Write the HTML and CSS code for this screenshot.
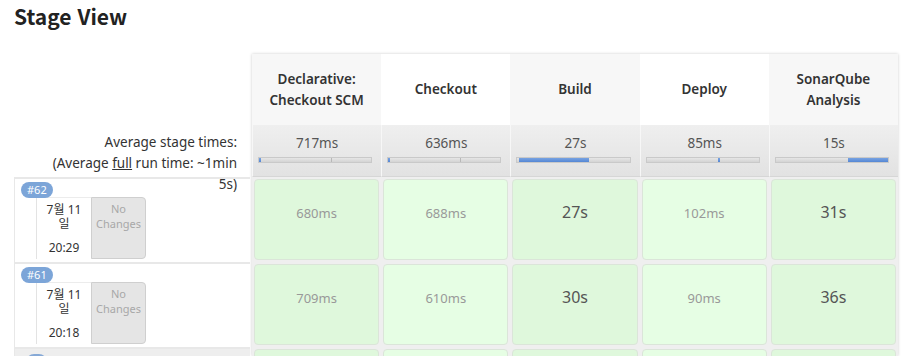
FILE: index.html
```html
<!DOCTYPE html>
<html lang="ko">
<head>
<meta charset="utf-8">
<title>Stage View</title>
<link rel="stylesheet" href="styles.css">
</head>
<body>
<h2 class="title">Stage View</h2>
<div class="sv">
  <div class="left">
    <div class="corner"></div>
    <div class="avg-label">Average stage times:<br>(Average <u>full</u> run time: ~1min 5s)</div>
    <div class="run">
      <span class="badge">#62</span>
      <div class="info">
        <div class="date"><div class="d">7월 11일</div><div class="t">20:29</div></div>
        <div class="nochg">No<br>Changes</div>
      </div>
    </div>
    <div class="run">
      <span class="badge">#61</span>
      <div class="info">
        <div class="date"><div class="d">7월 11일</div><div class="t">20:18</div></div>
        <div class="nochg">No<br>Changes</div>
      </div>
    </div>
    <div class="run dim"><span class="badge b3"></span></div>
  </div>

  <div class="stages">
    <div class="sh">Declarative:<br>Checkout SCM</div>
    <div class="sh alt">Checkout</div>
    <div class="sh">Build</div>
    <div class="sh alt">Deploy</div>
    <div class="sh">SonarQube<br>Analysis</div>

    <div class="sa">717ms<div class="bar"><i class="fill" style="left:0;width:1.5%"></i><i class="tick"></i></div></div>
    <div class="sa">636ms<div class="bar"><i class="fill" style="left:0;width:1.5%"></i><i class="tick"></i></div></div>
    <div class="sa">27s<div class="bar"><i class="fill" style="left:1%;width:63%"></i></div></div>
    <div class="sa">85ms<div class="bar"><i class="fill" style="left:63.5%;width:1%"></i></div></div>
    <div class="sa">15s<div class="bar"><i class="fill" style="left:64.5%;width:35.5%"></i></div></div>

    <div class="sc"><span class="ms">680ms</span></div>
    <div class="sc alt"><span class="ms">688ms</span></div>
    <div class="sc"><span class="s">27s</span></div>
    <div class="sc alt"><span class="ms">102ms</span></div>
    <div class="sc"><span class="s">31s</span></div>

    <div class="sc"><span class="ms">709ms</span></div>
    <div class="sc alt"><span class="ms">610ms</span></div>
    <div class="sc"><span class="s">30s</span></div>
    <div class="sc alt"><span class="ms">90ms</span></div>
    <div class="sc"><span class="s">36s</span></div>

    <div class="sc"></div>
    <div class="sc alt"></div>
    <div class="sc"></div>
    <div class="sc alt"></div>
    <div class="sc"></div>
  </div>
</div>
</body>
</html>
```

FILE: styles.css
```css
* { box-sizing: border-box; }
html, body { overflow: hidden; }
body {
  margin: 0;
  padding: 0 14px;
  background: #fff;
  color: #333;
  font-family: "Noto Sans", "Noto Sans CJK KR", sans-serif;
}
.title {
  margin: 0;
  height: 54px;
  padding-top: 2px;
  font-family: "Noto Sans CJK KR", sans-serif;
  font-size: 21px;
  line-height: 28px;
  font-weight: 700;
  color: #222;
}
.sv {
  display: flex;
  align-items: flex-start;
}
.left {
  width: 238px;
  display: grid;
  grid-template-rows: 71px 52px 85px 85px 9px;
}
.stages {
  width: 646px;
  display: grid;
  grid-template-columns: repeat(5, 1fr);
  grid-template-rows: 71px 52px 85px 85px 9px;
  background: #efefef;
  box-shadow: 0 0 3px rgba(0, 0, 0, 0.2);
}
.sh {
  display: flex;
  align-items: center;
  justify-content: center;
  text-align: center;
  background: #f7f7f7;
  font-size: 13.5px;
  line-height: 21px;
  font-weight: 600;
  color: #333;
}
.sh.alt { background: #fff; }
.avg-label {
  position: relative;
  z-index: 2;
  text-align: right;
  padding: 7px 15px 0 30px;
  font-size: 13.5px;
  line-height: 21px;
  color: #333;
}
.sa {
  text-align: center;
  padding-top: 8px;
  font-size: 13.5px;
  line-height: 20px;
  color: #555;
  background: linear-gradient(#efefef, #e2e2e2);
  border-left: 1px solid #f7f7f7;
  border-bottom: 1px solid #d6d6d6;
}
.bar {
  position: relative;
  height: 6px;
  margin: 4px 9px 0 5px;
  background: linear-gradient(#e6e6e6, #d4d4d4);
  border: 1px solid #c9c9c9;
}
.fill {
  position: absolute;
  top: 0;
  bottom: 0;
  min-width: 2px;
  background: linear-gradient(#78a3e2, #5587d4);
}
.tick {
  position: absolute;
  top: 0;
  bottom: 0;
  left: 64%;
  width: 1px;
  background: #b8b8b8;
}
.run {
  position: relative;
  margin-right: 2px;
  background: #fff;
  border-top: 2px solid #e8e8e8;
  border-left: 1px solid #e8e8e8;
}
.run.dim { background: #eeeeee; }
.badge {
  position: absolute;
  top: 3px;
  left: 6px;
  z-index: 1;
  height: 16px;
  padding: 0 6px;
  border-radius: 8px;
  background: #7ca5d8;
  color: #fff;
  font-size: 11px;
  line-height: 16px;
}
.badge.b3 { left: 11px; top: 5px; width: 21px; background: #86a9d6; }
.info {
  display: flex;
  margin: 18px 0 0 21px;
  height: 62px;
}
.date {
  width: 55px;
  border-left: 1px solid #e3e3e3;
  border-top: 1px solid #ececec;
  text-align: center;
  font-size: 12px;
  line-height: 14px;
  color: #333;
  padding: 5px 6px 0;
}
.t { margin-top: 10px; }
.nochg {
  width: 55px;
  background: #e5e5e5;
  border: 1px solid #cfcfcf;
  border-radius: 0 4px 4px 0;
  text-align: center;
  font-size: 11px;
  line-height: 15px;
  color: #a8a8a8;
  padding-top: 3px;
}
.sc {
  margin: 2px;
  border: 1px solid #dbe5d9;
  border-radius: 4px;
  background: #dff8dc;
  text-align: center;
  padding-top: 21px;
}
.sc.alt { background: #e6fee4; }
.ms { font-size: 13px; line-height: 18px; color: #999; }
.s { font-size: 16px; line-height: 18px; color: #555; }
```
